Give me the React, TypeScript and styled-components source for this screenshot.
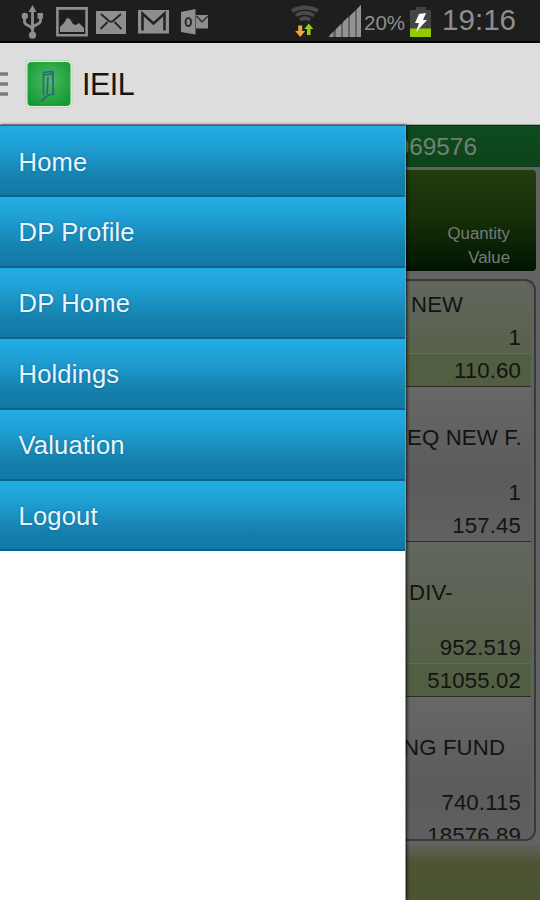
import React from "react";
import styled, { createGlobalStyle } from "styled-components";

const GlobalStyle = createGlobalStyle`
  * { box-sizing: border-box; }
  body { margin: 0; background: #fff; font-family: "Liberation Sans", Arial, sans-serif; }
`;

const Screen = styled.div`
  width: 540px;
  height: 900px;
  display: flex;
  flex-direction: column;
  overflow: hidden;
`;

const StatusBar = styled.header`
  height: 43px;
  flex: none;
  display: flex;
  justify-content: space-between;
  padding: 0 23px 0 21px;
  background: #1e1e1e;
  border-bottom: 2px solid #050505;
  color: #8e8e8e;
`;

const IconGroup = styled.div`
  display: flex;
  align-items: flex-start;
`;

const StatusIcon = styled.svg<{ $gap?: number }>`
  display: block;
  flex: none;
  margin-left: ${(p) => p.$gap ?? 0}px;
`;

const BatteryLevel = styled.span`
  margin: 11px 0 0 2px;
  width: 42px;
  font-size: 20.5px;
  line-height: 24px;
  white-space: nowrap;
`;

const Clock = styled.span`
  margin: 3px 0 0 10px;
  width: 75px;
  font-size: 29.6px;
  line-height: 34px;
  white-space: nowrap;
`;

const ActionBar = styled.div`
  height: 82px;
  flex: none;
  display: flex;
  align-items: center;
  background: #dddddd;
  border-bottom: 1px solid #a5a8a9;
`;

const MenuHandle = styled.svg`
  display: block;
  margin-right: 17px;
`;

const AppTitle = styled.h1`
  margin: 1px 0 0 9px;
  font-size: 30.5px;
  line-height: 36px;
  font-weight: 400;
  letter-spacing: -0.5px;
  color: #151515;
`;

const Body = styled.div`
  flex: 1;
  display: flex;
  min-height: 0;
`;

const Drawer = styled.nav`
  width: 406px;
  flex: none;
  z-index: 1;
  background: #fff;
  border-right: 1px solid #8d979b;
  box-shadow: 1px 0 3px rgba(0, 0, 0, 0.75);
`;

const DrawerItem = styled.div`
  height: 71px;
  padding: 0 18.5px;
  font-size: 25.6px;
  line-height: 71px;
  letter-spacing: 0.15px;
  color: #e8f7ff;
  text-shadow: 0 0 2px rgba(0, 50, 90, 0.5);
  background: linear-gradient(#23ade5 0%, #1f9fd3 30%, #1580ac 75%, #1279a5 100%);
  border-bottom: 2px solid #0b6389;

  &:first-child {
    height: 72px;
    line-height: 73px;
    border-top: 1px solid #146d92;
  }

  &:last-child {
    height: 70px;
  }
`;

const Page = styled.main`
  flex: 1;
  min-width: 0;
  display: flex;
  flex-direction: column;
  overflow: hidden;
  background: #636363;
`;

const Account = styled.div`
  height: 42px;
  flex: none;
  display: flex;
  justify-content: flex-end;
  padding-right: 63px;
  border-top: 1px solid #073512;
  background: linear-gradient(#0e4b20, #10431a);
  font-size: 24.4px;
  line-height: 41px;
  color: #71816f;
  white-space: nowrap;
`;

const TableHead = styled.div`
  height: 101px;
  flex: none;
  margin: 3px 4px 8px 0;
  padding: 0 26px 2px 0;
  display: flex;
  flex-direction: column;
  justify-content: flex-end;
  align-items: flex-end;
  border-radius: 0 4px 4px 0;
  background: linear-gradient(#213d0d 0%, #182f09 45%, #041a02 90%, #021000 100%);
  font-size: 16.8px;
  line-height: 23.5px;
  color: #777c73;
`;

const List = styled.section`
  height: 562px;
  flex: none;
  margin-right: 4px;
  padding: 1px 3px 0 0;
  border: 2px solid #363a38;
  border-left: 0;
  border-radius: 0 11px 11px 0;
  background: #606060;
  overflow: hidden;
`;

const Holding = styled.article<{ $tinted?: boolean; $first?: boolean }>`
  display: flex;
  flex-direction: column;
  border-bottom: 1px solid #292d26;
  border-top-right-radius: ${(p) => (p.$first ? 8 : 0)}px;
  background: ${(p) =>
    p.$tinted
      ? "linear-gradient(#62675f, #566048 75%)"
      : "linear-gradient(#676767, #5b5b5b 60%, #616161)"};
  font-size: 22.2px;
  line-height: 33px;
  letter-spacing: 0.15px;
  color: #111411;
`;

const FundName = styled.div<{ $short?: boolean; $shift: number }>`
  height: ${(p) => (p.$short ? 38 : 88)}px;
  padding-top: ${(p) => (p.$short ? 6 : 34)}px;
  margin-left: ${(p) => p.$shift}px;
  white-space: nowrap;
`;

const Figure = styled.div<{ $strip?: boolean }>`
  height: 33px;
  padding-right: 10px;
  text-align: right;
  border-top: 1px solid ${(p) => (p.$strip ? "#636a58" : "transparent")};
  background: ${(p) => (p.$strip ? "#525e42" : "transparent")};
  line-height: 33px;
`;

const Footer = styled.footer`
  flex: 1;
  background: linear-gradient(#666666 0, #5b5e50 8px, #4d5434 22px, #4b542f 100%);
`;

const menu = ["Home", "DP Profile", "DP Home", "Holdings", "Valuation", "Logout"];

const holdings = [
  { name: "NEW", shift: 5, quantity: "1", value: "110.60", tinted: true },
  { name: "EQ NEW F.", shift: 1, quantity: "1", value: "157.45", tinted: false },
  { name: "DIV-", shift: 3, quantity: "952.519", value: "51055.02", tinted: true },
  { name: "NG FUND", shift: -3, quantity: "740.115", value: "18576.89", tinted: false },
];

const UsbIcon = () => (
  <StatusIcon width="23" height="42" viewBox="0 0 23 42" fill="none" stroke="#8e8e8e" strokeWidth="2.8">
    <path d="M11.5 10v25M3.5 17v5c0 4 8 3 8 8M19.5 16v5c0 4-8 3-8 8" />
    <path d="m11.5 5 4 7h-8z" fill="#8e8e8e" stroke="none" />
    <circle cx="3.8" cy="16" r="3.2" fill="#8e8e8e" stroke="none" />
    <path d="M16.5 13h5.6v5.6h-5.6z" fill="#8e8e8e" stroke="none" />
    <circle cx="11.5" cy="35.2" r="3.6" fill="#8e8e8e" stroke="none" />
  </StatusIcon>
);

const PictureIcon = () => (
  <StatusIcon $gap={12} width="32" height="42" viewBox="0 0 32 42">
    <path d="M1.4 8.4h29.2v26.8H1.4z" fill="#1e1e1e" stroke="#8e8e8e" strokeWidth="2.6" />
    <path d="M4 32v-5l4-4 3-5 3 1 3 5 3 1 3-2 5 5v4z" fill="#8e8e8e" />
  </StatusIcon>
);

const MailIcon = () => (
  <StatusIcon $gap={8} width="30" height="42" viewBox="0 0 30 42">
    <path d="M0 11h30v23H0z" fill="#8e8e8e" />
    <path d="m5 14 8 7q2 1.6 4 0l8-7M4.5 29l7-7M25.5 29l-7-7" fill="none" stroke="#242424" strokeWidth="1.8" />
  </StatusIcon>
);

const GmailIcon = () => (
  <StatusIcon $gap={12} width="31" height="42" viewBox="0 0 31 42">
    <path d="M0 10h31v23.5H0z" fill="#8e8e8e" />
    <path d="M4.5 30.5V13.5l11 10 11-10v17" fill="none" stroke="#222" strokeWidth="2.5" />
  </StatusIcon>
);

const OutlookIcon = () => (
  <StatusIcon $gap={12} width="28" height="42" viewBox="0 0 28 42">
    <path d="M15 15h12v13.5H15z" fill="#8e8e8e" />
    <path d="m15.5 16 5.5 6 6-6" fill="none" stroke="#333" strokeWidth="1.5" />
    <path d="M0 12 14.5 9v25.5L0 32z" fill="#8e8e8e" />
    <ellipse cx="7.3" cy="22" rx="2.7" ry="4.1" fill="none" stroke="#2a2a2a" strokeWidth="2" />
  </StatusIcon>
);

const WifiIcon = () => (
  <StatusIcon width="30" height="42" viewBox="0 0 30 42" fill="none">
    <path d="M2 11q13-7 26 0M6 15.5q9-5.5 18 0M10 20q5-3.5 10 0" stroke="#494949" strokeWidth="3.8" />
    <path d="M8.2 25.5h4V31h3l-5 6-5-6h3z" fill="#f4a33f" />
    <path d="M17 35v-6h-2.8l4.6-5.5 4.6 5.5h-2.8v6z" fill="#8ccf17" />
  </StatusIcon>
);

const SignalIcon = () => (
  <StatusIcon $gap={8} width="34" height="42" viewBox="0 0 34 42">
    <path d="M0 37 33 5v32z" fill="#646464" />
    <path d="M2 37v-2l3-3v5zM8 37v-8l5-5v13zM15 37V22l5-5v20zM22 37V16l5-5v26zM29 37V9l4-4v32z" fill="#939393" />
  </StatusIcon>
);

const BatteryIcon = () => (
  <StatusIcon $gap={4} width="22" height="42" viewBox="0 0 22 42">
    <path d="M6 7h10v3h5v27H0V10h6z" fill="#444" />
    <path d="M0 28.5h21V37H0z" fill="#97c900" />
    <path d="m9 14 7-1-3 7h4L6 32l3-9H5z" fill="#fff" />
  </StatusIcon>
);

const AppLogo = () => (
  <svg width="48" height="50" viewBox="0 0 48 50">
    <defs>
      <radialGradient id="leaf" cx="50%" cy="42%" r="65%">
        <stop offset="0" stopColor="#4cba67" />
        <stop offset="1" stopColor="#159a32" />
      </radialGradient>
    </defs>
    <rect x="1" y="1.5" width="46" height="47" rx="4" fill="#edf2e9" stroke="#b9d4b7" />
    <rect x="2.5" y="3" width="43" height="44" rx="4" fill="url(#leaf)" />
    <path d="M18.5 36V13.5l9-1 1 23.5M19 16l9-1M22 35l1-17M29 35l-6 1-7 6M28 13v20" fill="none" stroke="#30677e" strokeWidth="1.7" />
  </svg>
);

export default function App() {
  return (
    <>
      <GlobalStyle />
      <Screen>
        <StatusBar>
          <IconGroup>
            <UsbIcon />
            <PictureIcon />
            <MailIcon />
            <GmailIcon />
            <OutlookIcon />
          </IconGroup>
          <IconGroup>
            <WifiIcon />
            <SignalIcon />
            <BatteryLevel>20%</BatteryLevel>
            <BatteryIcon />
            <Clock>19:16</Clock>
          </IconGroup>
        </StatusBar>
        <ActionBar>
          <MenuHandle width="8" height="26" viewBox="0 0 8 26">
            <path d="M0 3h8M0 13h8M0 23h8" stroke="#7b7b7b" strokeWidth="3.5" />
          </MenuHandle>
          <AppLogo />
          <AppTitle>IEIL</AppTitle>
        </ActionBar>
        <Body>
          <Drawer>
            {menu.map((label) => (
              <DrawerItem key={label}>{label}</DrawerItem>
            ))}
          </Drawer>
          <Page>
            <Account>069576</Account>
            <TableHead>
              <span>Quantity</span>
              <span>Value</span>
            </TableHead>
            <List>
              {holdings.map((h, i) => (
                <Holding key={h.name} $tinted={h.tinted} $first={i === 0}>
                  <FundName $short={i === 0} $shift={h.shift}>{h.name}</FundName>
                  <Figure>{h.quantity}</Figure>
                  <Figure $strip={h.tinted}>{h.value}</Figure>
                </Holding>
              ))}
            </List>
            <Footer />
          </Page>
        </Body>
      </Screen>
    </>
  );
}
